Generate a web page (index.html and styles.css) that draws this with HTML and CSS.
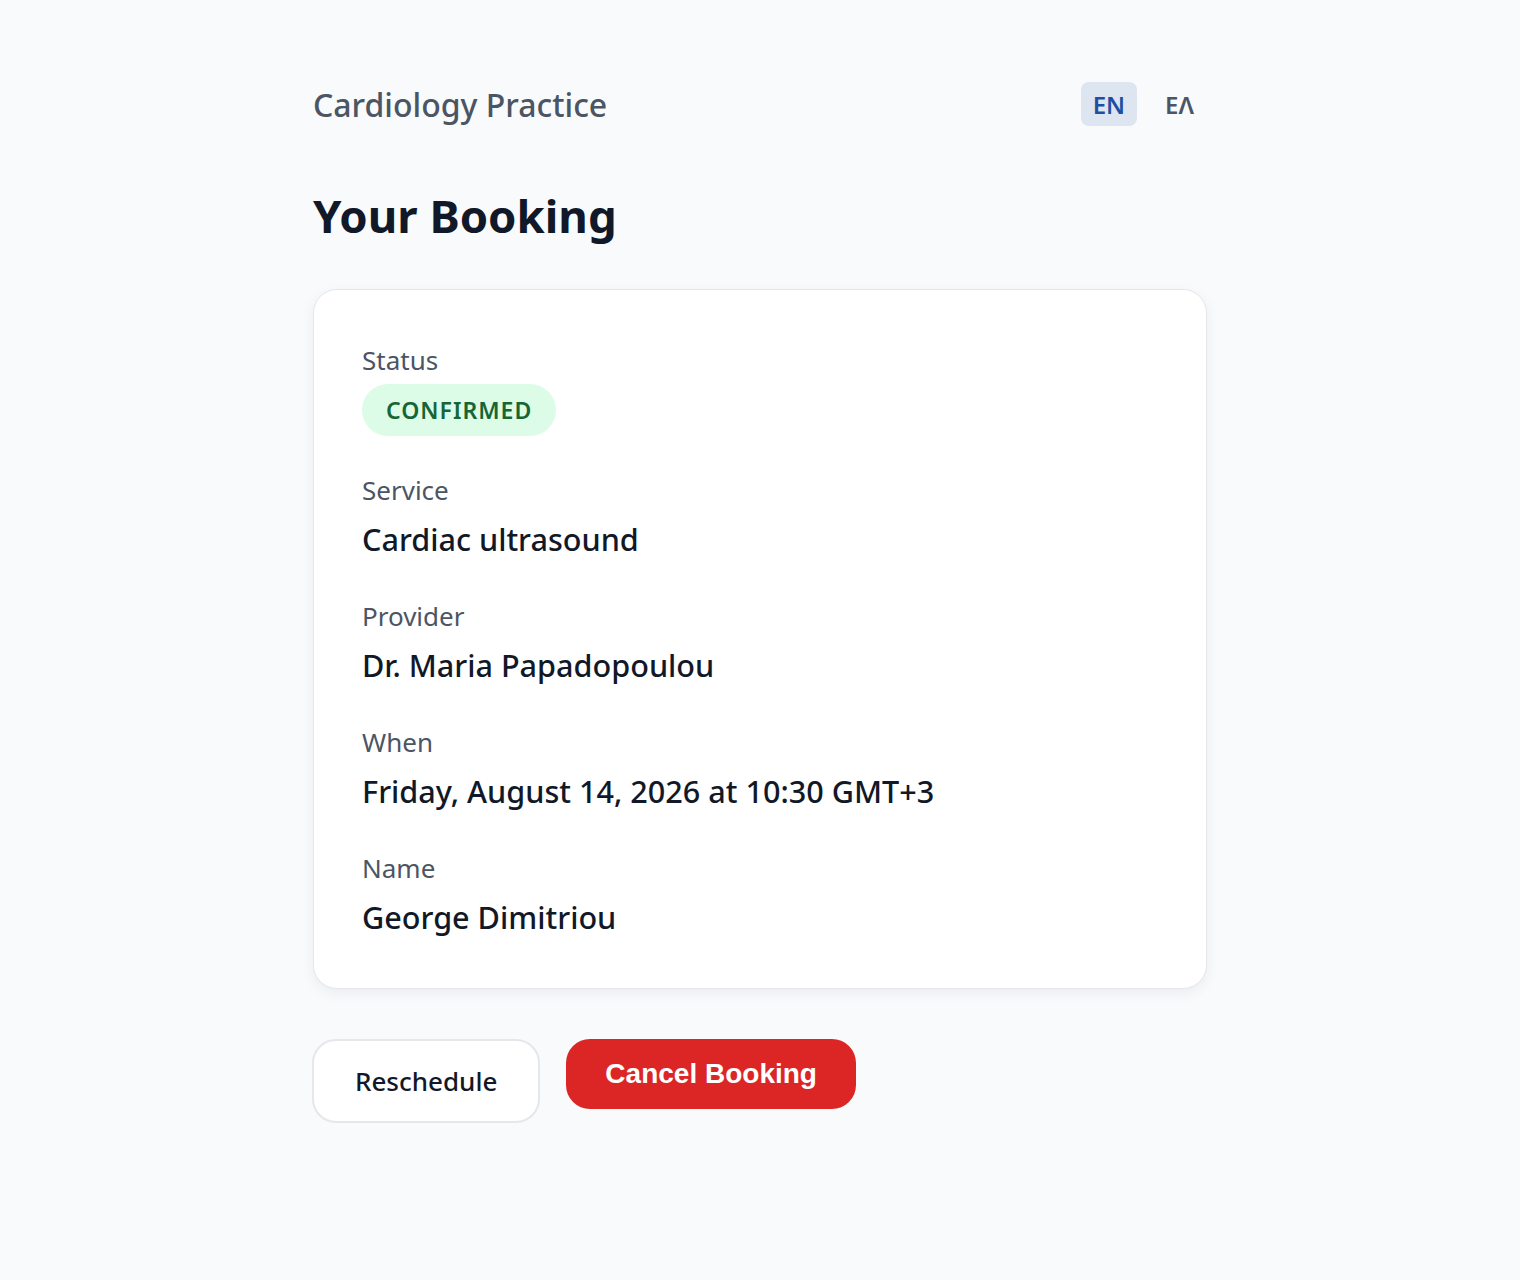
FILE: index.html
```html
<!DOCTYPE html>
<html lang="en">
<head>
<meta charset="utf-8">
<title>Your Booking</title>
<link rel="stylesheet" href="styles.css">
</head>
<body>
<main class="page">
  <header class="top">
    <div class="brand">Cardiology Practice</div>
    <nav class="langs">
      <button class="lang active">EN</button>
      <button class="lang">ΕΛ</button>
    </nav>
  </header>
  <h1 class="title">Your Booking</h1>
  <section class="card">
    <div class="field">
      <div class="label">Status</div>
      <div class="badge">CONFIRMED</div>
    </div>
    <div class="field">
      <div class="label">Service</div>
      <div class="value">Cardiac ultrasound</div>
    </div>
    <div class="field">
      <div class="label">Provider</div>
      <div class="value">Dr. Maria Papadopoulou</div>
    </div>
    <div class="field">
      <div class="label">When</div>
      <div class="value">Friday, August 14, 2026 at 10:30 GMT+3</div>
    </div>
    <div class="field">
      <div class="label">Name</div>
      <div class="value">George Dimitriou</div>
    </div>
  </section>
  <div class="actions">
    <button class="btn btn-outline">Reschedule</button>
    <button class="btn btn-danger">Cancel Booking</button>
  </div>
</main>
</body>
</html>
```
FILE: styles.css
```css
* { box-sizing: border-box; }
html, body { margin: 0; padding: 0; }
body {
  background: #f8fafc;
  font-family: "Noto Sans", "Open Sans", sans-serif;
  color: #111827;
}
.page {
  width: 896px;
  margin: 0 auto;
  padding-top: 82px;
}
.top {
  display: flex;
  align-items: center;
  justify-content: space-between;
  height: 44px;
}
.brand {
  padding-left: 1px;
  font-size: 32px;
  font-weight: 500;
  color: #4b5563;
}
.langs { display: flex; gap: 16px; margin-right: 2px; }
.lang {
  font-family: inherit;
  font-size: 24px;
  font-weight: 600;
  height: 44px;
  padding: 0 12px;
  border: none;
  border-radius: 8px;
  background: transparent;
  color: #4b5563;
}
.lang.active { background: #dde5f0; color: #1e4fa3; }
.title {
  margin: 60px 0 45px;
  padding-left: 1px;
  font-size: 45.5px;
  line-height: 58px;
  font-weight: 700;
  color: #111827;
}
.card {
  margin-left: 1px;
  width: 894px;
  background: #fff;
  border: 1px solid #e5e7eb;
  border-radius: 24px;
  box-shadow: 0 4px 14px rgba(15, 23, 42, 0.06);
  padding: 52px 48px 48px;
  display: flex;
  flex-direction: column;
  gap: 36px;
}
.field { display: flex; flex-direction: column; align-items: flex-start; }
.label {
  font-size: 26px;
  line-height: 36px;
  color: #4b5563;
}
.value {
  margin-top: 9px;
  font-size: 30.6px;
  line-height: 45px;
  font-weight: 500;
  color: #111827;
}
.badge {
  margin-top: 6px;
  height: 52px;
  display: flex;
  align-items: center;
  padding: 0 24px;
  border-radius: 999px;
  background: #dcfce7;
  color: #166534;
  font-size: 23px;
  font-weight: 600;
  letter-spacing: 1px;
}
.actions {
  margin-top: 50px;
  display: flex;
  align-items: flex-start;
  gap: 26px;
}
.btn {
  border-radius: 24px;
  cursor: pointer;
}
.btn-outline {
  font-family: "Noto Sans", "Open Sans", sans-serif;
  font-size: 26px;
  font-weight: 500;
  color: #111827;
  background: #fff;
  border: 2px solid #e5e7eb;
  height: 84px;
  padding: 0 41px;
}
.btn-danger {
  font-family: "Liberation Sans", Arial, sans-serif;
  font-size: 28px;
  font-weight: 700;
  color: #fff;
  background: #dc2626;
  border: none;
  height: 70px;
  padding: 0 39px;
}
```
